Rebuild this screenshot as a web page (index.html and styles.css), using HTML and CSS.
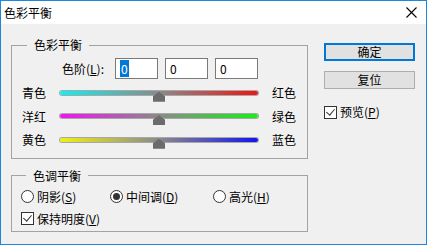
FILE: index.html
```html
<!DOCTYPE html>
<html lang="zh-CN">
<head>
  <meta charset="UTF-8" />
  <title>色彩平衡</title>
  <link rel="stylesheet" href="styles.css">
</head>
<body>
  <div class="window">
    <div class="titlebar">
      <span class="title">色彩平衡</span>
      <svg class="close" width="11" height="11" viewBox="0 0 11 11">
        <path d="M0.5 0.5 L10.5 10.5 M10.5 0.5 L0.5 10.5" stroke="#000" stroke-width="1.1" fill="none" />
      </svg>
    </div>

    <div class="content">
      <div class="left">
        <fieldset class="group balance">
          <legend>色彩平衡</legend>
          <div class="levels">
            <span class="levels-label">色阶(<u>L</u>):</span>
            <span class="field"><span class="sel">0</span></span>
            <span class="field">0</span>
            <span class="field">0</span>
          </div>

          <div class="sliders">
            <span>青色</span>
            <div class="track cyan-red"><div class="thumb"></div></div>
            <span>红色</span>

            <span>洋红</span>
            <div class="track magenta-green"><div class="thumb"></div></div>
            <span>绿色</span>

            <span>黄色</span>
            <div class="track yellow-blue"><div class="thumb"></div></div>
            <span>蓝色</span>
          </div>
        </fieldset>

        <fieldset class="group tone">
          <legend>色调平衡</legend>
          <div class="radios">
            <label class="opt"><span class="radio"></span>阴影(<u>S</u>)</label>
            <label class="opt"><span class="radio checked"></span>中间调(<u>D</u>)</label>
            <label class="opt"><span class="radio"></span>高光(<u>H</u>)</label>
          </div>
          <label class="opt check-row"><span class="checkbox checked"></span>保持明度(<u>V</u>)</label>
        </fieldset>
      </div>

      <div class="right">
        <button class="btn default">确定</button>
        <button class="btn">复位</button>
        <label class="opt preview"><span class="checkbox checked"></span>预览(<u>P</u>)</label>
      </div>
    </div>
  </div>
</body>
</html>
```

FILE: styles.css
```css
body {
  margin: 0;
  font-family: "Noto Sans CJK SC", "DejaVu Sans", sans-serif;
  font-size: 12px;
  color: #000;
}
.window {
  width: 427px;
  height: 245px;
  box-sizing: border-box;
  border: 1px solid #1f86d9;
  background: #f0f0f0;
}
.titlebar {
  height: 23px;
  background: #fff;
  display: flex;
  justify-content: space-between;
  align-items: center;
  padding: 0 9px 0 3px;
}
.title {
  font-size: 12px;
  line-height: 16px;
}
.close {
  display: block;
}
.content {
  display: flex;
  align-items: flex-start;
  padding: 13px 0 0 10px;
}
.left {
  width: 297px;
}
.group {
  margin: 0;
  padding: 0 10px 0 10px;
  border: 1px solid #a3a3a3;
  min-width: 0;
}
.group legend {
  margin-left: 5px;
  padding: 0 7px;
  line-height: 16px;
}
.levels {
  display: flex;
  align-items: center;
  gap: 7px;
  margin: 5px 0 0 40px;
}
.levels-label {
  margin-right: 4px;
}
.field {
  width: 37px;
  height: 19px;
  border: 1px solid #7a7a7a;
  background: #fff;
  line-height: 19px;
  padding-left: 4px;
}
.sel {
  background: #0078d7;
  color: #fff;
  padding: 0 1px;
}
.sliders {
  display: grid;
  grid-template-columns: 38px 198px auto;
  grid-auto-rows: 23.5px;
  align-items: center;
  margin-top: 2px;
  padding-bottom: 6px;
}
.sliders span:nth-child(3n) {
  padding-left: 14px;
}
.track {
  position: relative;
  height: 4px;
  border-radius: 2px;
  box-shadow: 0 0 0 1px #a8a8a8;
}
.cyan-red {
  background: linear-gradient(to right, #12f0f0, #8a8a8a 50%, #f01414);
}
.magenta-green {
  background: linear-gradient(to right, #f014f0, #8a8a8a 50%, #14f014);
}
.yellow-blue {
  background: linear-gradient(to right, #f0f014, #8a8a8a 50%, #1414f0);
}
.thumb {
  position: absolute;
  left: 93px;
  top: 1px;
  width: 12px;
  height: 10px;
  background: #6b6b6b;
  clip-path: polygon(50% 0, 100% 45%, 100% 100%, 0 100%, 0 45%);
}
.tone {
  margin-top: 9px;
  padding-left: 9px;
  padding-bottom: 2px;
}
.radios {
  display: grid;
  grid-template-columns: 89px 103px auto;
  height: 20px;
  align-items: center;
  margin-top: 3px;
}
.opt {
  display: flex;
  align-items: center;
  line-height: 16px;
  white-space: nowrap;
}
.check-row {
  height: 20px;
  margin-top: 2px;
}
.radio {
  width: 11px;
  height: 11px;
  border: 1px solid #333;
  border-radius: 50%;
  background: #fff;
  margin-right: 3px;
  display: flex;
  align-items: center;
  justify-content: center;
}
.radio.checked::after {
  content: "";
  width: 7px;
  height: 7px;
  border-radius: 50%;
  background: #333;
}
.checkbox {
  width: 11px;
  height: 11px;
  border: 1px solid #333;
  background: #fff;
  margin-right: 3px;
  position: relative;
}
.checkbox.checked::after {
  content: "";
  position: absolute;
  left: 3px;
  top: 0;
  width: 4px;
  height: 7px;
  border: solid #333;
  border-width: 0 1px 1px 0;
  transform: rotate(40deg);
}
.right {
  display: flex;
  flex-direction: column;
  margin-left: 16px;
  padding-top: 6px;
  width: 91px;
}
.btn {
  font-family: inherit;
  font-size: 12px;
  height: 18px;
  padding: 0;
  line-height: 14px;
  background: #e1e1e1;
  border: 1px solid #adadad;
  color: #000;
  margin-bottom: 10px;
}
.btn.default {
  border: 2px solid #0078d7;
}
.preview {
  margin-top: 5px;
}
```
